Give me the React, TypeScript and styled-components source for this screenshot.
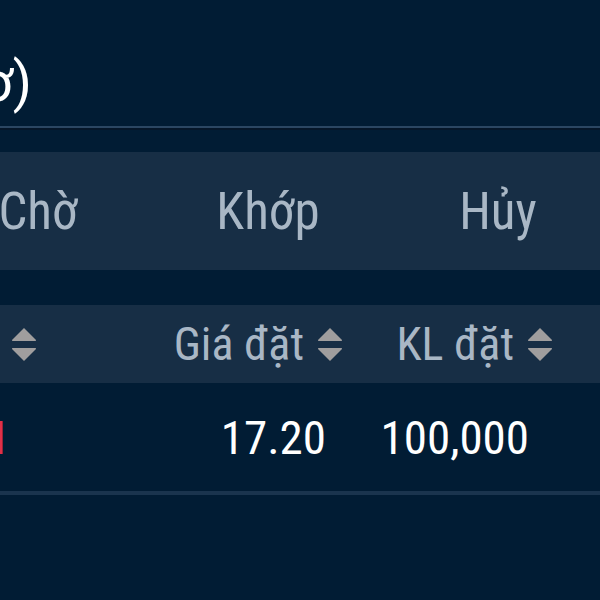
import * as React from 'react';
import styled, { createGlobalStyle } from 'styled-components';

const GlobalStyle = createGlobalStyle`
  html, body {
    margin: 0;
    padding: 0;
    background: #011c34;
    overflow: hidden;
  }
  body {
    font-family: 'Roboto Condensed', Roboto, 'Liberation Sans', sans-serif;
  }
`;

const panelBg = '#172e45';
const labelColor = '#a9b7c5';

// the screen is wider than the window; we only see its middle part
const Sheet = styled.div`
  width: 920px;
  margin-left: -307px;
  min-height: 600px;
  display: flex;
  flex-direction: column;
`;

const TitleBar = styled.header`
  height: 128px;
  display: flex;
  align-items: flex-end;
  padding-bottom: 16px;
  box-sizing: border-box;
  border-bottom: 2px solid #2b4662;
  box-shadow: 0 2px 0 #051629;
`;

const TitleBox = styled.div`
  width: 339px;
  display: flex;
  justify-content: flex-end;
`;

const Title = styled.h1`
  margin: 0;
  font-family: Roboto, 'Liberation Sans', sans-serif;
  font-weight: 400;
  font-size: 55px;
  line-height: 1;
  color: #ffffff;
  white-space: nowrap;
`;

const Tabs = styled.nav`
  margin-top: 24px;
  height: 118px;
  background: ${panelBg};
  display: grid;
  grid-template-columns: repeat(4, 230px);
  align-items: center;
`;

const Tab = styled.div<{ active?: boolean }>`
  text-align: center;
  font-size: 51px;
  line-height: 1;
  color: ${(p) => (p.active ? '#ffffff' : labelColor)};
`;

const cols = '357px 304px 210px 49px';

const HeadRow = styled.div`
  margin-top: 35px;
  height: 78px;
  background: ${panelBg};
  display: grid;
  grid-template-columns: ${cols};
  align-items: center;
`;

const HeadCell = styled.div<{ pad: number }>`
  display: flex;
  align-items: center;
  justify-content: flex-end;
  gap: 13px;
  padding-right: ${(p) => p.pad}px;
  font-size: 46px;
  line-height: 1;
  color: ${labelColor};
  white-space: nowrap;
`;

const DataRow = styled.div`
  height: 112px;
  box-sizing: border-box;
  display: grid;
  grid-template-columns: ${cols};
  align-items: center;
  border-bottom: 4px solid #1a344e;
`;

const Cell = styled.div<{ pad: number; red?: boolean }>`
  text-align: right;
  padding-right: ${(p) => p.pad}px;
  font-size: 47px;
  line-height: 1;
  color: ${(p) => (p.red ? '#e0304a' : '#ffffff')};
  white-space: nowrap;
`;

function SortIcon() {
  return (
    <svg width="26" height="35" viewBox="0 0 26 35" aria-hidden={true}>
      <path d="M13 1 L25 13 Q25.5 14 24 14 L2 14 Q0.5 14 1 13 Z" fill="#a09e9e" />
      <path d="M2 21 L24 21 Q25.5 21 25 22 L13 34 L1 22 Q0.5 21 2 21 Z" fill="#a09e9e" />
    </svg>
  );
}

export default function App() {
  return (
    <>
      <GlobalStyle />
      <Sheet>
        <TitleBar>
          <TitleBox>
            <Title>Sổ lệnh (Lệnh chờ)</Title>
          </TitleBox>
        </TitleBar>
        <Tabs>
          <Tab active>Tất cả</Tab>
          <Tab>Chờ</Tab>
          <Tab>Khớp</Tab>
          <Tab>Hủy</Tab>
        </Tabs>
        <HeadRow>
          <HeadCell pad={13}>
            Mã CK <SortIcon />
          </HeadCell>
          <HeadCell pad={11}>
            Giá đặt <SortIcon />
          </HeadCell>
          <HeadCell pad={11}>
            KL đặt <SortIcon />
          </HeadCell>
          <div />
        </HeadRow>
        <DataRow>
          <Cell pad={44} red>
            SSI
          </Cell>
          <Cell pad={28}>17.20</Cell>
          <Cell pad={35}>100,000</Cell>
          <div />
        </DataRow>
      </Sheet>
    </>
  );
}
